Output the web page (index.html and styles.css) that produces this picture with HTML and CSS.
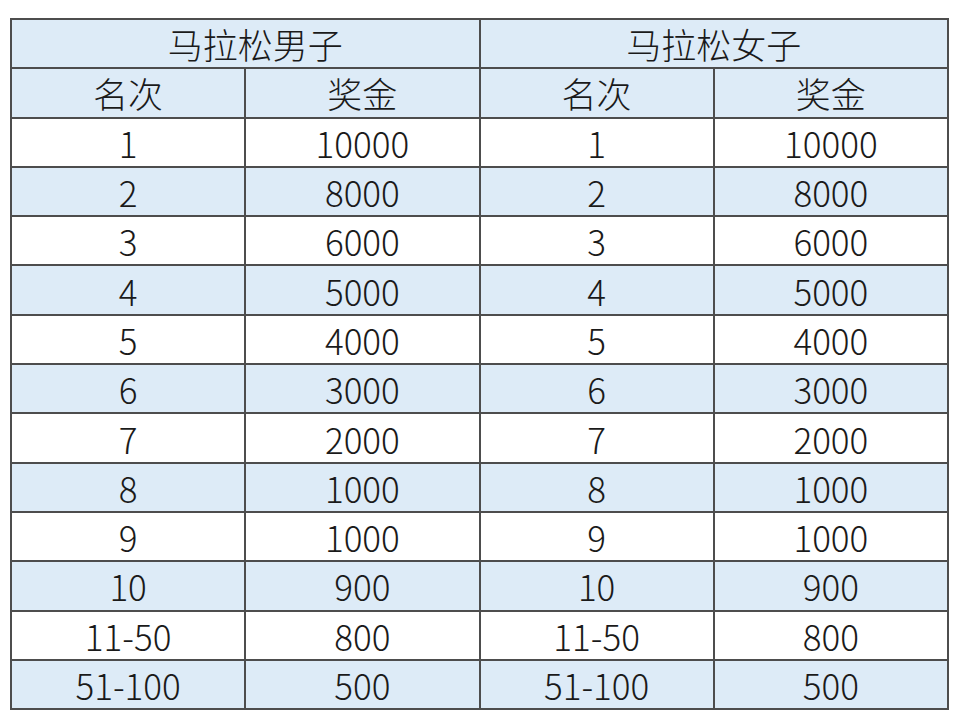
FILE: index.html
```html
<!DOCTYPE html>
<html lang="zh-CN">
<head>
<meta charset="utf-8">
<title>马拉松奖金</title>
<link rel="stylesheet" href="styles.css">
</head>
<body>
<table class="prize">
  <colgroup><col><col><col><col></colgroup>
  <thead>
    <tr class="blue"><th colspan="2" class="shift">马拉松男子</th><th colspan="2">马拉松女子</th></tr>
    <tr class="blue"><th>名次</th><th>奖金</th><th>名次</th><th>奖金</th></tr>
  </thead>
  <tbody>
    <tr><td>1</td><td>10000</td><td>1</td><td>10000</td></tr>
    <tr class="blue"><td>2</td><td>8000</td><td>2</td><td>8000</td></tr>
    <tr><td>3</td><td>6000</td><td>3</td><td>6000</td></tr>
    <tr class="blue"><td>4</td><td>5000</td><td>4</td><td>5000</td></tr>
    <tr><td>5</td><td>4000</td><td>5</td><td>4000</td></tr>
    <tr class="blue"><td>6</td><td>3000</td><td>6</td><td>3000</td></tr>
    <tr><td>7</td><td>2000</td><td>7</td><td>2000</td></tr>
    <tr class="blue"><td>8</td><td>1000</td><td>8</td><td>1000</td></tr>
    <tr><td>9</td><td>1000</td><td>9</td><td>1000</td></tr>
    <tr class="blue"><td>10</td><td>900</td><td>10</td><td>900</td></tr>
    <tr><td>11-50</td><td>800</td><td>11-50</td><td>800</td></tr>
    <tr class="blue"><td>51-100</td><td>500</td><td>51-100</td><td>500</td></tr>
  </tbody>
</table>
</body>
</html>
```
FILE: styles.css
```css
html, body {
  margin: 0;
  background: #ffffff;
}
body {
  padding: 18px 0 0 10px;
  font-family: "Noto Sans CJK SC", "Noto Sans", sans-serif;
}
.prize {
  border-collapse: collapse;
  table-layout: fixed;
  width: 939px;
  color: #1a1a1a;
}
.prize th,
.prize td {
  border: 2px solid #4d4d4d;
  height: 47.3px;
  padding: 0;
  text-align: center;
  vertical-align: middle;
  font-weight: 300;
  font-size: 35px;
  line-height: 47px;
}
.prize th.shift {
  padding-left: 20px;
}
.prize tr.blue {
  background: #ddebf7;
}
```
